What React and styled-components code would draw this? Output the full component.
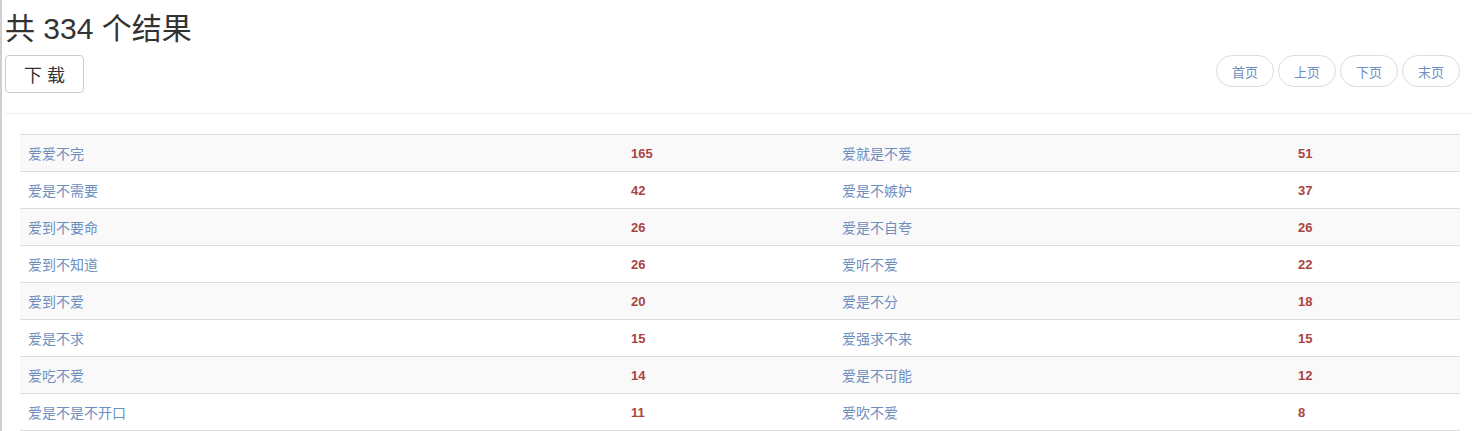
import React from "react";
import styled, { createGlobalStyle } from "styled-components";

const Global = createGlobalStyle`
  body {
    margin: 0;
    background: #fff;
    font-family: "Liberation Sans", Arial, "Noto Sans CJK SC", sans-serif;
    color: #333;
  }
`;

const Page = styled.div`
  border-left: 2px solid #d0d0d0;
  min-height: 431px;
  box-sizing: border-box;
  padding: 0 12px 0 3px;
`;

const Title = styled.h1`
  margin: 0;
  padding-top: 9px;
  font-size: 30px;
  font-weight: 400;
  line-height: 40px;
  color: #333;
`;

const Toolbar = styled.div`
  display: flex;
  justify-content: space-between;
  align-items: flex-start;
  margin-top: 6px;
`;

const DownloadButton = styled.button`
  width: 79px;
  height: 38px;
  border: 1px solid #ccc;
  border-radius: 4px;
  background: #fff;
  color: #333;
  font-family: inherit;
  font-size: 18px;
  padding: 0;
  cursor: pointer;
`;

const Pager = styled.div`
  display: flex;
  gap: 4px;
`;

const PageButton = styled.a`
  display: flex;
  align-items: center;
  justify-content: center;
  width: 58px;
  height: 32px;
  box-sizing: border-box;
  border: 1px solid #ddd;
  border-radius: 16px;
  font-size: 13px;
  color: #6d8fc0;
  text-decoration: none;
`;

const Divider = styled.hr`
  border: 0;
  border-top: 1px solid #eee;
  margin: 20px -12px 20px 0;
`;

const Table = styled.table`
  width: 1440px;
  margin-left: 15px;
  border-collapse: collapse;
  table-layout: fixed;
  border-bottom: 1px solid #ddd;
`;

const Row = styled.tr`
  background: ${(p) => (p.$striped ? "#f9f9f9" : "#fff")};
  border-top: 1px solid #ddd;
`;

const WordCell = styled.td`
  height: 36px;
  padding: 0 8px;
  font-size: 14px;
  color: #6d8fc0;
`;

const CountCell = styled.td`
  padding: 0 8px;
  font-size: 13px;
  font-weight: 700;
  color: #a94442;
`;

const rows = [
  ["爱爱不完", 165, "爱就是不爱", 51],
  ["爱是不需要", 42, "爱是不嫉妒", 37],
  ["爱到不要命", 26, "爱是不自夸", 26],
  ["爱到不知道", 26, "爱听不爱", 22],
  ["爱到不爱", 20, "爱是不分", 18],
  ["爱是不求", 15, "爱强求不来", 15],
  ["爱吃不爱", 14, "爱是不可能", 12],
  ["爱是不是不开口", 11, "爱吹不爱", 8],
];

export default function App() {
  return (
    <Page>
      <Global />
      <Title>共 334 个结果</Title>
      <Toolbar>
        <DownloadButton>下 载</DownloadButton>
        <Pager>
          <PageButton href="#">首页</PageButton>
          <PageButton href="#">上页</PageButton>
          <PageButton href="#">下页</PageButton>
          <PageButton href="#">末页</PageButton>
        </Pager>
      </Toolbar>
      <Divider />
      <Table>
        <colgroup>
          <col style={{ width: 603 }} />
          <col style={{ width: 211 }} />
          <col style={{ width: 456 }} />
          <col style={{ width: 170 }} />
        </colgroup>
        <tbody>
          {rows.map((r, i) => (
            <Row key={i} $striped={i % 2 === 0}>
              <WordCell>{r[0]}</WordCell>
              <CountCell>{r[1]}</CountCell>
              <WordCell>{r[2]}</WordCell>
              <CountCell>{r[3]}</CountCell>
            </Row>
          ))}
        </tbody>
      </Table>
    </Page>
  );
}
